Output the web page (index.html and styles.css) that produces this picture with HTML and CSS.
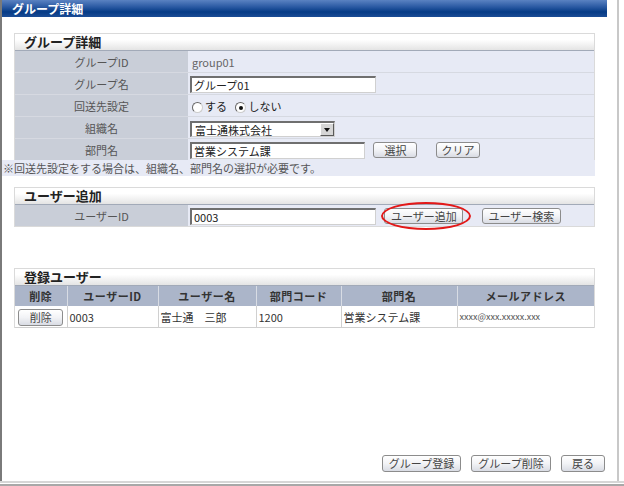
FILE: index.html
```html
<!DOCTYPE html>
<html lang="ja">
<head>
  <meta charset="UTF-8" />
  <title>グループ詳細</title>
  <link rel="stylesheet" href="styles.css">
</head>
<body>
  <div class="window">
    <div class="titlebar">グループ詳細</div>

    <div class="content">
      <div class="section">
        <div class="section-head">グループ詳細</div>
        <table class="form">
          <tr>
            <th>グループID</th>
            <td><span class="plain">group01</span></td>
          </tr>
          <tr>
            <th>グループ名</th>
            <td><span class="field w-long">グループ01</span></td>
          </tr>
          <tr>
            <th>回送先設定</th>
            <td>
              <span class="radio"></span><span class="radio-label">する</span>
              <span class="radio checked"></span><span class="radio-label">しない</span>
            </td>
          </tr>
          <tr>
            <th>組織名</th>
            <td>
              <span class="select">富士通株式会社<span class="select-arrow"></span></span>
            </td>
          </tr>
          <tr>
            <th>部門名</th>
            <td>
              <span class="field w-mid">営業システム課</span>
              <button class="btn btn-s first">選択</button>
              <button class="btn btn-s next">クリア</button>
            </td>
          </tr>
        </table>
      </div>
      <div class="note">※回送先設定をする場合は、組織名、部門名の選択が必要です。</div>

      <div class="section add">
        <div class="section-head">ユーザー追加</div>
        <table class="form">
          <tr>
            <th>ユーザーID</th>
            <td>
              <span class="field w-long">0003</span>
              <span class="marked"><button class="btn btn-l first">ユーザー追加</button></span>
              <button class="btn btn-l next">ユーザー検索</button>
            </td>
          </tr>
        </table>
      </div>

      <div class="section users">
        <div class="section-head">登録ユーザー</div>
        <table class="list">
          <colgroup>
            <col style="width: 52px">
            <col style="width: 91px">
            <col style="width: 98px">
            <col style="width: 85px">
            <col style="width: 116px">
            <col style="width: 137px">
          </colgroup>
          <tr>
            <th>削除</th>
            <th>ユーザーID</th>
            <th>ユーザー名</th>
            <th>部門コード</th>
            <th>部門名</th>
            <th>メールアドレス</th>
          </tr>
          <tr>
            <td class="center"><button class="btn btn-del">削除</button></td>
            <td>0003</td>
            <td>富士通　三郎</td>
            <td>1200</td>
            <td>営業システム課</td>
            <td class="mail">xxxx@xxx.xxxxx.xxx</td>
          </tr>
        </table>
      </div>
    </div>

    <div class="actions">
      <button class="btn btn-l">グループ登録</button>
      <button class="btn btn-xl">グループ削除</button>
      <button class="btn btn-s">戻る</button>
    </div>
  </div>
  <div class="statusbar"></div>
</body>
</html>
```

FILE: styles.css
```css
body {
  margin: 0;
  background: #ffffff;
  font-family: "Noto Sans CJK JP", "DejaVu Sans", sans-serif;
  font-size: 11px;
  color: #444444;
}

.window {
  box-sizing: border-box;
  width: 619px;
  height: 481px;
  border-left: 2px solid #7a7a7a;
  border-right: 2px solid #c8c8c8;
  display: flex;
  flex-direction: column;
}

.titlebar {
  height: 17px;
  margin-right: 10px;
  padding-left: 10px;
  background: linear-gradient(#5a82c2, #2b5aa3 40%, #053b86 70%, #1b4c95);
  color: #ffffff;
  font-weight: bold;
  font-size: 12px;
  line-height: 17px;
}

.content {
  padding-left: 12px;
}

.section {
  width: 581px;
  box-sizing: border-box;
  border: 1px solid #dadada;
  border-bottom: none;
  margin-top: 16px;
}

.section.add {
  margin-top: 11px;
  border-bottom: 1px solid #dadada;
}

.section.users {
  margin-top: 41px;
}

.section-head {
  height: 16px;
  line-height: 16px;
  padding-left: 9px;
  font-size: 13px;
  font-weight: bold;
  color: #222222;
  background: linear-gradient(#ffffff, #ffffff 35%, #e4e4e4);
  border-bottom: 1px solid #a2aab8;
}

.form {
  width: 100%;
  border-collapse: collapse;
  table-layout: fixed;
}

.form th,
.form td {
  height: 21px;
  padding: 0;
  border-bottom: 1px solid #d6d9e1;
  font-weight: normal;
  white-space: nowrap;
}

.form tr:last-child th,
.form tr:last-child td {
  border-bottom: none;
}

.form th {
  width: 173px;
  background: #c9ced8;
  color: #555555;
  text-align: center;
}

.form td {
  background: #e7eaf5;
  padding-left: 2px;
}

.plain {
  padding-left: 2px;
  color: #666666;
}

.field,
.select {
  display: inline-block;
  vertical-align: middle;
  box-sizing: border-box;
  height: 17px;
  line-height: 14px;
  padding-left: 2px;
  background: #ffffff;
  border: 1px solid #d0d0d0;
  border-top: 2px solid #6f6f6f;
  border-left: 2px solid #6f6f6f;
  color: #222222;
}

.w-long {
  width: 186px;
}

.w-mid {
  width: 175px;
}

.select {
  position: relative;
  width: 145px;
  height: 16px;
  padding-left: 3px;
}

.select-arrow {
  position: absolute;
  right: 0;
  top: 0;
  width: 14px;
  height: 13px;
  box-sizing: border-box;
  background: #d6d6d6;
  border: 1px solid;
  border-color: #ffffff #5a5a5a #5a5a5a #ffffff;
}

.select-arrow::after {
  content: "";
  position: absolute;
  left: 3px;
  top: 4px;
  border-left: 3px solid transparent;
  border-right: 3px solid transparent;
  border-top: 4px solid #111111;
}

.radio {
  display: inline-block;
  vertical-align: middle;
  position: relative;
  width: 11px;
  height: 11px;
  box-sizing: border-box;
  margin-left: 2px;
  border-radius: 50%;
  border: 1px solid #666666;
  border-right-color: #cccccc;
  border-bottom-color: #cccccc;
  background: #ffffff;
}

.radio.checked::after {
  content: "";
  position: absolute;
  left: 3px;
  top: 3px;
  width: 4px;
  height: 4px;
  border-radius: 50%;
  background: #111111;
}

.radio-label {
  margin: 0 4px 0 2px;
  color: #222222;
}

.btn {
  box-sizing: border-box;
  height: 16px;
  padding: 0;
  vertical-align: middle;
  border: 1px solid #8c8c8c;
  border-radius: 3px;
  background: linear-gradient(#ffffff, #f2f3f6 50%, #d9dce4);
  font-family: inherit;
  font-size: 11px;
  line-height: 13px;
  color: #444444;
}

.btn-s {
  width: 44px;
}

.btn-l {
  width: 79px;
}

.btn-xl {
  width: 80px;
}

.btn-del {
  width: 45px;
  height: 17px;
}

.btn.first {
  margin-left: 6px;
}

.btn.next {
  margin-left: 16px;
}

.marked {
  position: relative;
  display: inline-block;
  vertical-align: middle;
  height: 16px;
}

.marked .btn {
  vertical-align: top;
}

.marked::after {
  content: "";
  position: absolute;
  left: 3px;
  top: -6px;
  width: 86px;
  height: 24px;
  border: 2px solid #e31818;
  border-radius: 50%;
}

.note {
  width: 593px;
  margin-left: -12px;
  height: 16px;
  line-height: 16px;
  padding-left: 1px;
  box-sizing: border-box;
  background: #e7eaf5;
  color: #555555;
}

.list {
  width: 100%;
  border-collapse: collapse;
  table-layout: fixed;
}

.list th {
  height: 20px;
  padding: 0;
  background: #abb5c9;
  color: #333333;
  border-left: 1px solid #d8dce4;
  text-align: center;
  font-size: 11px;
  letter-spacing: 0.5px;
}

.list th:first-child,
.list td:first-child {
  border-left: none;
}

.list td {
  height: 21px;
  padding: 0 0 0 2px;
  border-left: 1px solid #d0d0d0;
  border-bottom: 1px solid #cfcfcf;
  background: #ffffff;
  color: #333333;
  white-space: nowrap;
}

.list td.center {
  text-align: center;
  padding: 0;
}

.list td.mail {
  font-size: 9px;
  color: #555555;
}

.actions {
  margin-top: auto;
  margin-bottom: 9px;
  padding-right: 12px;
  display: flex;
  justify-content: flex-end;
  gap: 10px;
}

.actions .btn {
  height: 17px;
}

.statusbar {
  height: 5px;
  box-sizing: border-box;
  border-top: 2px solid #d6d6d6;
  border-bottom: 2px solid #a8a8a8;
}
```
